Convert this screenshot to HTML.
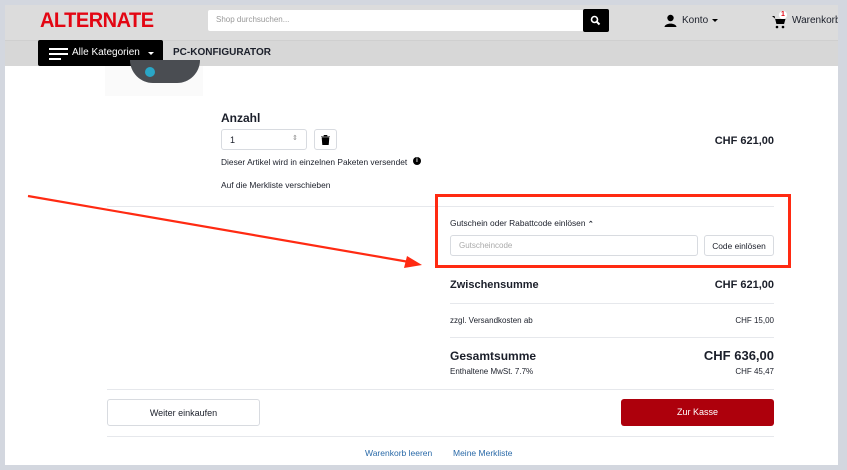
<!DOCTYPE html>
<html><head><meta charset="utf-8"><style>
*{box-sizing:border-box;margin:0;padding:0}
body{width:847px;height:470px;background:#d3d7df;font-family:"Liberation Sans",sans-serif;color:#1b1f2a;position:relative;overflow:hidden}
.page{position:absolute;left:5px;top:5px;width:833px;height:460px;background:#fff;overflow:hidden}
.a{position:absolute}
.hdr{left:0;top:0;width:833px;height:35px;background:#dcdcdc}
.nav{left:0;top:35px;width:833px;height:26px;background:#d7d7d7;border-top:1px solid #cfcfcf}
.t{position:absolute;white-space:nowrap}
.line{position:absolute;height:1px;background:#e6e8ec}
.btn{position:absolute;border:1px solid #d8dbe0;border-radius:3px;background:#fff;font-size:9px;text-align:center}
</style></head><body>
<div class="page">
<div class="a hdr"></div>
<div class="t" style="left:35px;top:4px;font-size:21px;font-weight:bold;color:#e30613;letter-spacing:-0.5px;transform:scaleX(0.95);transform-origin:left">ALTERNATE</div>
<div class="a" style="left:203px;top:5px;width:376px;height:21px;background:#fff;border-radius:2px"></div>
<div class="t" style="left:211px;top:10px;font-size:8px;color:#999">Shop durchsuchen...</div>
<div class="a" style="left:578px;top:4px;width:26px;height:23px;background:#000;border-radius:2px"></div>
<svg class="a" style="left:585px;top:10px" width="11" height="11" viewBox="0 0 11 11"><circle cx="4.5" cy="4.5" r="3" fill="none" stroke="#fff" stroke-width="1.6"/><path d="M6.7 6.7L9.5 9.5" stroke="#fff" stroke-width="2"/></svg>
<svg class="a" style="left:659px;top:9px" width="13" height="13" viewBox="0 0 13 13"><circle cx="6.5" cy="4" r="3.2" fill="#000"/><path d="M0.5 13C1 8.5 12 8.5 12.5 13Z" fill="#000"/></svg>
<div class="t" style="left:677px;top:10px;font-size:10px">Konto</div>
<div class="a" style="left:707px;top:14px;border:3px solid transparent;border-top:3px solid #000;border-bottom:0"></div>
<svg class="a" style="left:767px;top:10px" width="14" height="14" viewBox="0 0 14 14"><path d="M0 1H2.5L4.5 9H12L13.5 4H3.5" fill="#000"/><path d="M2.5 1L4.5 9H12L13 4H3.3" fill="#000"/><circle cx="5" cy="12" r="1.3" fill="#000"/><circle cx="11" cy="12" r="1.3" fill="#000"/></svg>
<div class="a" style="left:774px;top:6px;width:8px;height:8px;border-radius:50%;background:#fff;font-size:7px;color:#e30613;font-weight:bold;text-align:center;line-height:8px">1</div>
<div class="t" style="left:787px;top:10px;font-size:10px">Warenkorb</div>
<div class="a nav"></div>
<div class="a" style="left:33px;top:35px;width:125px;height:26px;background:#000;border-radius:2px"></div>
<div class="a" style="left:44px;top:43px;width:19px;height:2px;background:#fff"></div>
<div class="a" style="left:44px;top:48px;width:19px;height:2px;background:#fff"></div>
<div class="a" style="left:44px;top:53px;width:12px;height:2px;background:#fff"></div>
<div class="t" style="left:67px;top:42px;font-size:10px;color:#fff">Alle Kategorien</div>
<div class="a" style="left:143px;top:47px;border:3px solid transparent;border-top:3px solid #fff;border-bottom:0"></div>
<div class="t" style="left:168px;top:42px;font-size:10px;font-weight:bold">PC-KONFIGURATOR</div>
<div class="a" style="left:100px;top:61px;width:98px;height:30px;background:#fafafa"></div>
<div class="a" style="left:125px;top:55px;width:70px;height:23px;border-radius:0 0 30px 30px;background:#4a4d52"></div>
<div class="a" style="left:140px;top:62px;width:10px;height:10px;border-radius:50%;background:#2aa6c6"></div>
<div class="t" style="left:216px;top:106px;font-size:12px;font-weight:bold">Anzahl</div>
<div class="btn" style="left:216px;top:124px;width:86px;height:21px;text-align:left;padding:5px 0 0 8px">1</div>
<div class="t" style="left:287px;top:129px;font-size:7px;color:#888">⇕</div>
<div class="btn" style="left:309px;top:124px;width:23px;height:21px"></div>
<svg class="a" style="left:316px;top:130px" width="9" height="10" viewBox="0 0 9 10"><path d="M0 1.5H9M3 1.5V0H6V1.5M1 2.5H8L7.4 10H1.6Z" fill="#000" stroke="#000" stroke-width="0.6"/></svg>
<div class="t" style="left:216px;top:152px;font-size:8.4px">Dieser Artikel wird in einzelnen Paketen versendet</div>
<div class="a" style="left:408px;top:152px;width:8px;height:8px;border-radius:50%;background:#000;color:#fff;font-size:6px;text-align:center;line-height:8px;font-weight:bold">i</div>
<div class="t" style="left:216px;top:175px;font-size:8.4px">Auf die Merkliste verschieben</div>
<div class="t" style="right:64px;top:130px;font-size:11px;font-weight:bold">CHF 621,00</div>
<div class="line" style="left:102px;top:201px;width:667px"></div>
<svg class="a" style="left:0;top:0" width="833" height="460"><line x1="23" y1="191" x2="410" y2="258" stroke="#ff2a12" stroke-width="2.2"/><path d="M417 260L402 251L399 263Z" fill="#ff2a12"/></svg>
<div class="a" style="left:430px;top:189px;width:356px;height:74px;border:3px solid #ff2a12"></div>
<div class="t" style="left:445px;top:213px;font-size:8.4px">Gutschein oder Rabattcode einlösen <b style="font-size:7px">⌃</b></div>
<div class="btn" style="left:445px;top:230px;width:248px;height:21px;text-align:left;padding:5px 0 0 8px;color:#aaa;font-size:8px">Gutscheincode</div>
<div class="btn" style="left:699px;top:230px;width:70px;height:21px;padding-top:5px;font-size:8.4px">Code einlösen</div>
<div class="t" style="left:445px;top:274px;font-size:11px;font-weight:bold">Zwischensumme</div>
<div class="t" style="right:64px;top:274px;font-size:11px;font-weight:bold">CHF 621,00</div>
<div class="line" style="left:445px;top:298px;width:324px"></div>
<div class="t" style="left:445px;top:311px;font-size:8px">zzgl. Versandkosten ab</div>
<div class="t" style="right:64px;top:311px;font-size:8px">CHF 15,00</div>
<div class="line" style="left:445px;top:332px;width:324px"></div>
<div class="t" style="left:445px;top:344px;font-size:12px;font-weight:bold">Gesamtsumme</div>
<div class="t" style="right:64px;top:343px;font-size:13px;font-weight:bold">CHF 636,00</div>
<div class="t" style="left:445px;top:362px;font-size:8px">Enthaltene MwSt. 7.7%</div>
<div class="t" style="right:64px;top:362px;font-size:8px">CHF 45,47</div>
<div class="line" style="left:102px;top:384px;width:667px"></div>
<div class="btn" style="left:102px;top:394px;width:153px;height:27px;padding-top:8px">Weiter einkaufen</div>
<div class="a" style="left:616px;top:394px;width:153px;height:27px;background:#ad000c;border-radius:3px;color:#fff;font-size:9px;text-align:center;padding-top:8px">Zur Kasse</div>
<div class="line" style="left:102px;top:431px;width:667px"></div>
<div class="t" style="left:360px;top:443px;font-size:8.5px;color:#2a6aa8">Warenkorb leeren</div>
<div class="t" style="left:448px;top:443px;font-size:8.5px;color:#2a6aa8">Meine Merkliste</div>
</div>
</body></html>
